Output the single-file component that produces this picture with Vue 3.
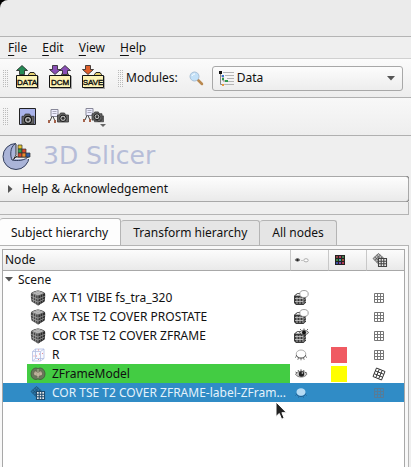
<script setup>
import { ref } from 'vue'

const menus = ['File', 'Edit', 'View', 'Help']
const folders = [
  { label: 'DATA', arrows: [{ x: 1, up: true, color: '#258a55' }] },
  { label: 'DCM', arrows: [{ x: 1, up: false, color: '#8a4fb5' }, { x: 11, up: true, color: '#8a4fb5' }] },
  { label: 'SAVE', arrows: [{ x: 1, up: false, color: '#e0602c' }] }
]
const tabs = ['Subject hierarchy', 'Transform hierarchy', 'All nodes']
const activeTab = ref(0)
const module = ref('Data')
const nodes = [
  { name: 'AX T1 VIBE fs_tra_320', icon: 'volume', vis: 'volhidden', grid: 'grid' },
  { name: 'AX TSE T2 COVER PROSTATE', icon: 'volume', vis: 'volhidden', grid: 'grid' },
  { name: 'COR TSE T2 COVER ZFRAME', icon: 'volume', vis: 'volshown', grid: 'grid' },
  { name: 'R', icon: 'roi', vis: 'closed', swatch: 'red', grid: 'grid' },
  { name: 'ZFrameModel', icon: 'model', vis: 'open', swatch: 'yellow', grid: 'tilted', state: 'green' },
  { name: 'COR TSE T2 COVER ZFRAME-label-ZFram...', icon: 'transform', vis: 'closedsel', grid: 'grid', state: 'selected' }
]
const arrowUp = 'M6 .5 11.500 5.500H8.500v4h-5v-4H.5Z'
const arrowDown = 'M3.500 .5h5v4h3L6 9.500 .5 4.500h3Z'
</script>

<template>
  <svg class="sprites" aria-hidden="true">
    <symbol id="volume" viewBox="0 0 16 16">
      <path d="M8 .5C10 .7 13 1.500 15 3.200c.3 3 .1 6-.6 8.300L8 15.500 1.600 11.500C.9 9 .7 6 1 3.200 3 1.500 6 .7 8 .5Z" fill="#444" />
      <path d="M8 .5 15 3.200 8 6 1 3.200Z" fill="#8d8d8d" />
      <path d="M8 6v9.500l6.400-4C15 9 15.300 6 15 3.200Z" fill="#2b2b2b" />
      <path d="M3.300 2.200 10.300 5M5.700 1.300 12.600 4M12.600 2.200 5.700 5M10.300 1.300 3.300 4" stroke="#ddd" stroke-width=".5" />
      <path d="M1 6.200l7 3 7-3M1.300 9l6.700 3.200L14.700 9M3.400 4.200v8.300M5.700 5v9M8 6v9.500" fill="none" stroke="#bbb" stroke-width=".6" />
      <path d="M10.300 5v9M12.600 4.200v8.300" stroke="#888" stroke-width=".6" />
    </symbol>
    <symbol id="roi" viewBox="0 0 16 16">
      <path d="M2.500 4.500h8v9.500h-8ZM5.500 2h8.500v9.500H5.500ZM2.500 4.500l3-2.500M10.500 4.500 14 2M10.500 14l3.500-2.500M2.500 14l3-2.500" fill="#f4f6ff" fill-opacity=".5" stroke="#b3bee2" stroke-width=".8" />
      <path d="M6 9h1M12 6.500h1M8 3h1M3.500 9h1M8 12.500h1M9 7h1" stroke="#e88890" />
    </symbol>
    <symbol id="model" viewBox="0 0 16 16">
      <path d="M1 8c0-3 2-6 5-6 1 0 1.400.5 2 .5S9 2 10 2c3 0 5 3 5 6s-2 5.500-5 5.500c-1 0-1.400-.5-2-.5s-1 .5-2 .5C3 13.500 1 11 1 8Z" fill="#66795a" stroke="#44543c" stroke-width=".8" />
      <path d="M4 6c1-2 3-1 4 1 1-2 3-3 4-1s0 4-2 4-1 2-2 1-1-1-2-1-3-2-2-4Z" fill="#b3a993" stroke="#665c4c" stroke-width=".7" />
      <path d="M8 3v9M4 8h2M10 8h2" stroke="#d4c9b0" stroke-width=".7" />
    </symbol>
    <symbol id="transform" viewBox="0 0 16 16">
      <path d="M1 6.500 6.500 1.500 12 6.500 6.500 12Z" fill="currentColor" opacity=".35" />
      <path d="M1 6.500 6.500 1.500 12 6.500 6.500 12ZM2.800 5l5.500 5.300M4.700 3.200l5.500 5.300M2.800 8.300 8.400 3.200M4.700 10.100l5.500-5.200" fill="none" stroke="currentColor" stroke-width=".7" />
      <path class="cell" d="M6.500 6.500h8v8h-8Z" />
      <path d="M6.500 6.500h8v8h-8ZM9.200 6.500v8M11.800 6.500v8M6.500 9.200h8M6.500 11.800h8" fill="none" stroke="currentColor" stroke-width="1.100" />
    </symbol>
    <symbol id="grid" viewBox="0 0 16 16">
      <path d="M3.500 3.500h9v9h-9ZM6.500 3.500v9M9.500 3.500v9M3.500 6.500h9M3.500 9.500h9" fill="none" stroke="currentColor" />
    </symbol>
    <symbol id="tilted" viewBox="0 0 16 16">
      <path d="M5.500 2 14 5.500 10.500 14 2 10.500ZM8.300 3.200 4.800 11.700M11.200 4.300 7.700 12.800M4.300 4.800l8.500 3.500M3.200 7.700l8.500 3.500" fill="none" stroke="#333" />
    </symbol>
    <symbol id="closed" viewBox="0 0 16 16">
      <path d="M3.500 9.500l-1.500 1M5.500 11l-.7 1.800M8 11v2.300M10.500 11l.7 1.800M12.500 9.500l1.500 1" stroke="#666" stroke-width=".9" />
      <ellipse cx="8" cy="7" rx="4.800" ry="4" fill="#fff" stroke="#999" stroke-width=".8" />
      <path d="M3.200 8c1 4.200 8.600 4.200 9.600 0" fill="none" stroke="#555" stroke-width=".9" />
    </symbol>
    <symbol id="closedsel" viewBox="0 0 16 16">
      <path d="M3.200 8.500c1 4 8.600 4 9.600 0M3.500 9.500l-1 1M6 11.500l-.5 1M10 11.500l.5 1M12.500 9.500l1 1" fill="none" stroke="#225f91" />
      <ellipse cx="8" cy="7" rx="4.500" ry="3.800" fill="#b5daf3" />
    </symbol>
    <symbol id="open" viewBox="0 0 16 16">
      <path d="M2.500 8.500C4 4.500 12 4 14 8c-2 4-9 4-11.500.5Z" fill="#ccc" stroke="#666" stroke-width=".8" />
      <circle cx="8.500" cy="8" r="2.700" fill="#222" />
      <circle cx="9.300" cy="7" r=".7" fill="#fff" />
      <path d="M2.500 6 4 7M5 4l.8 1.500M8 3.300V5M11 4l-.7 1.500M13.500 6l-1 1" stroke="#333" stroke-width=".8" />
    </symbol>
    <symbol id="volbase" viewBox="0 0 16 16">
      <path d="M1 6 4 3.500h9v9L10.500 15H3l-2-2Z" fill="#3a3a3a" />
      <path d="M1.500 6l3-2.500h5L7 6Z" fill="#eee" stroke="#333" stroke-width=".7" />
      <path d="M2 8.500h8M2 11.500h8M4 7v7M7 7v7M10 7v7M11.500 9.500l1.500-1M11.500 12l1.500-1" stroke="#ccc" stroke-width=".8" />
    </symbol>
    <symbol id="volhidden" viewBox="0 0 16 16">
      <use href="#volbase" />
      <ellipse cx="11" cy="4" rx="4.200" ry="3.500" fill="#fff" stroke="#888" stroke-width=".8" />
    </symbol>
    <symbol id="volshown" viewBox="0 0 16 16">
      <use href="#volbase" />
      <path d="M6.500 4.500C8 1.500 14 1.500 15.500 4.500 14 7.500 8 7.500 6.500 4.500Z" fill="#ccc" stroke="#444" stroke-width=".8" />
      <circle cx="11" cy="4.500" r="2" fill="#111" />
      <path d="M8 2 7 1M11 2V.5M14 2l1-1" stroke="#444" stroke-width=".8" />
    </symbol>
    <symbol id="camera" viewBox="0 0 12 11">
      <path d="M.5 3h2l1-2h4l1 2h3v7H.5Z" fill="#666" stroke="#333" stroke-width=".8" />
      <circle cx="6" cy="6.300" r="3.200" fill="#bbb" stroke="#111" />
      <circle cx="6" cy="6.300" r="1.500" fill="#333" />
    </symbol>
    <symbol id="scene" viewBox="0 0 12 15">
      <path d="M3 .5h7v7H3Z" fill="#eef" stroke="#889" />
      <path d="M4.500 2.500h4M4.500 4.500h4" stroke="#aab" />
      <path d="M4 7.500 2 12M5 7.500l2 4.500" stroke="#444" />
      <path d="M0 11h2v3H0ZM6 11h2v3H6Z" fill="#a5634c" />
    </symbol>
  </svg>

  <main class="window">
    <header class="titlebar"></header>
    <nav class="menubar" aria-label="Main menu">
      <button v-for="m in menus" :key="m" type="button"><u>{{ m[0] }}</u>{{ m.slice(1) }}</button>
    </nav>

    <div class="toolbar">
      <span class="grip"></span>
      <div class="folders">
        <button v-for="f in folders" :key="f.label" type="button" class="tool">
          <svg width="24" height="26" viewBox="0 0 24 26">
            <path d="M2 11h21v13H2Z" fill="#aaa" />
            <path d="M12.500 11V9.500l1.500-2h4l1.500 2V11" fill="#e3cf70" stroke="#222" />
            <path d="M.5 10.500h21v12H.5Z" fill="#fcf3b4" stroke="#111" />
            <path v-for="a in f.arrows" :key="a.x" :d="a.up ? arrowUp : arrowDown" :transform="`translate(${a.x - 1} 0)`" :fill="a.color" stroke="#222" stroke-width=".8" />
            <text x="11" y="20" text-anchor="middle" class="folder-text">{{ f.label }}</text>
          </svg>
        </button>
      </div>
      <span class="grip"></span>
      <label class="modules" for="module">Modules:</label>
      <button type="button" class="tool search" aria-label="Search">
        <svg width="15" height="15" viewBox="0 0 15 15">
          <path d="m9 9 4 4" stroke="#b98950" stroke-width="2.500" stroke-linecap="round" />
          <circle cx="5.500" cy="5.500" r="4.500" fill="#c3e1f8" stroke="#a9bfd4" />
          <path d="M3 5c.5-1.500 1.500-2 3-2" fill="none" stroke="#fff" />
        </svg>
      </button>
      <div class="combo">
        <svg width="15" height="15" viewBox="0 0 15 15">
          <path d="M4 1.500h11M6 4.500h9M8 7.500h7M8 10.500h7M6 13.500h9" stroke="#b4b4b4" stroke-width="1.200" />
          <path d="M1.500 2v11.500h4M1.500 5h3M4 5v5h4" fill="none" stroke="#888" />
          <path d="M0 0h3v3H0Z" fill="#111" />
          <path d="M3 4h2v2H3Z" fill="#3b78d0" />
          <path d="M3 7h2v2H3ZM6 9h3v2H6Z" fill="#2f9a4d" />
          <path d="M3 13h2v2H3Z" fill="#e79a3c" />
        </svg>
        <select id="module" v-model="module"><option>Data</option></select>
        <svg width="8" height="5" viewBox="0 0 8 5"><path d="M0 0h8L4 4.500Z" fill="#555" /></svg>
      </div>
    </div>

    <div class="toolbar second">
      <span class="grip"></span>
      <div class="captures">
        <button type="button" class="tool" aria-label="Capture">
          <svg width="17" height="18" viewBox="0 0 17 18">
            <path d="M.5 .5h16v16H.5Z" fill="#a9b3ea" stroke="#222" />
            <use href="#camera" x="2" y="5" width="14" height="12" />
          </svg>
        </button>
        <button type="button" class="tool" aria-label="Scene view">
          <svg width="22" height="18" viewBox="0 0 22 18">
            <use href="#scene" y="1" width="12" height="15" />
            <use href="#camera" x="9" y="4" width="12" height="11" />
          </svg>
        </button>
        <button type="button" class="tool" aria-label="Restore view">
          <svg width="25" height="20" viewBox="0 0 25 20">
            <use href="#scene" x="1" y="1" width="12" height="15" />
            <use href="#camera" x="12" y="6" width="10" height="10" />
            <use href="#camera" x="9" y="4" width="12" height="10" />
            <path d="M18 17h6l-3 3Z" fill="#666" />
          </svg>
        </button>
      </div>
    </div>

    <section class="brand">
      <svg width="29" height="29" viewBox="0 0 29 29">
        <circle cx="14" cy="14.500" r="13" fill="#aab4d8" stroke="#333e5c" />
        <path d="M14 1v11l-4 6 3-1h16V8L22 1Z" fill="#efefef" />
        <path d="M13 2C8 5 8 14 10 18c5 1 13 1 17-4" fill="none" stroke="#333e5c" />
        <path d="M14 2v11l-3 5M14 15h13M12 17l3-3" fill="none" stroke="#333" />
        <path d="M16 3h4v4h-4Z" fill="#e6c62c" stroke="#333" stroke-width=".7" />
        <path d="M16 7h4v4h-4Z" fill="#37a051" stroke="#333" stroke-width=".7" />
        <path d="M16 11h4v4h-4ZM20 7h4v4h-4Z" fill="#d9482b" stroke="#333" stroke-width=".7" />
        <path d="M20 11h4v4h-4Z" fill="#ed8b2d" stroke="#333" stroke-width=".7" />
        <path d="M24 11h4v4h-4Z" fill="#315fa8" stroke="#333" stroke-width=".7" />
      </svg>
      <h1>3D Slicer</h1>
    </section>

    <button type="button" class="help">
      <svg width="5" height="8" viewBox="0 0 5 8"><path d="M0 0 4.500 4 0 8Z" fill="#555" /></svg>
      Help &amp; Acknowledgement
    </button>
    <div class="help-body"></div>

    <div class="tabs" role="tablist">
      <button v-for="(t, i) in tabs" :key="t" type="button" role="tab" :aria-selected="i === activeTab" :class="{ active: i === activeTab }" @click="activeTab = i">{{ t }}</button>
    </div>

    <section class="pane">
      <div class="tree">
        <table>
          <colgroup><col /><col class="narrow" /><col class="narrow" /><col class="narrow" /></colgroup>
          <thead>
            <tr>
              <th>Node</th>
              <th>
                <svg width="16" height="16" viewBox="0 0 16 16">
                  <path d="M1 8c1-2 4-2 5 0-1 1.500-4 1.500-5 0Z" fill="#999" stroke="#666" stroke-width=".7" />
                  <circle cx="3.500" cy="8" r="1.200" fill="#222" />
                  <path d="m7.500 9 1-1" stroke="#999" />
                  <ellipse cx="12" cy="8.300" rx="2.200" ry="1.600" fill="#fff" stroke="#999" stroke-width=".8" />
                </svg>
              </th>
              <th>
                <svg width="16" height="16" viewBox="0 0 16 16">
                  <path d="M3 3h10v10H3Z" fill="#222" />
                  <path d="M4 4h2v2H4Z" fill="#914343" /><path d="M7 4h2v2H7Z" fill="#b03c60" /><path d="M10 4h2v2h-2Z" fill="#487848" />
                  <path d="M4 7h2v2H4Z" fill="#3b8a46" /><path d="M7 7h2v2H7Z" fill="#3fa0a0" /><path d="M10 7h2v2h-2Z" fill="#9a4f35" />
                  <path d="M4 10h2v2H4Z" fill="#3c50a5" /><path d="M7 10h2v2H7Z" fill="#7d42a0" /><path d="M10 10h2v2h-2Z" fill="#b03850" />
                </svg>
              </th>
              <th><svg width="16" height="16"><use href="#transform" /></svg></th>
            </tr>
          </thead>
          <tbody>
            <tr class="scene">
              <td colspan="4">
                <button type="button" class="expander">
                  <svg width="8" height="5" viewBox="0 0 8 5"><path d="M0 0h8L4 4.500Z" fill="#555" /></svg>
                  Scene
                </button>
              </td>
            </tr>
            <tr v-for="n in nodes" :key="n.name" :class="n.state">
              <td class="name">
                <div class="node">
                  <svg width="16" height="16"><use :href="'#' + n.icon" /></svg>
                  <span>{{ n.name }}</span>
                </div>
              </td>
              <td><svg width="16" height="16"><use :href="'#' + n.vis" /></svg></td>
              <td><i v-if="n.swatch" class="swatch" :class="n.swatch"></i></td>
              <td><svg width="16" height="16" class="gridicon"><use :href="'#' + n.grid" /></svg></td>
            </tr>
          </tbody>
        </table>
        <svg class="pointer" width="13" height="20" viewBox="0 0 13 20">
          <path d="M1 1v14.500l3.300-3 2.300 5.700 2.600-1-2.300-5.500H11.500Z" fill="#222" stroke="#fff" />
        </svg>
      </div>
    </section>
  </main>
</template>

<style>
body { background: #000; }
</style>

<style scoped>
.sprites { position: absolute; width: 0; height: 0; }
.window {
  min-height: 100vh;
  display: flex;
  flex-direction: column;
  font: 12px/18px "Noto Sans", sans-serif;
  color: #111;
}
svg { flex: none; display: block; }
button { font: inherit; color: inherit; border: 0; padding: 0; background: none; }
.titlebar { height: 36px; background: #ebebeb; border-bottom: 1px solid #b4b4b4; border-top-left-radius: 8px; }
.menubar { height: 21px; display: flex; gap: 15px; padding-left: 8px; background: #efefef; border-bottom: 1px solid #d0d0d0; }
.menubar u { text-underline-offset: 3px; text-decoration-skip-ink: none; }
.toolbar {
  height: 38px;
  display: flex;
  align-items: center;
  padding: 0 8px 0 3px;
  background: linear-gradient(#fbfbfb, #ededed);
  border-bottom: 1px solid #b0b0b0;
}
.toolbar.second { height: 37px; background: linear-gradient(#f8f8f8, #eee); }
.grip {
  width: 5px;
  height: 17px;
  background: linear-gradient(90deg, transparent 50%, #f5f5f5 50%) 0 0 / 2px 2px, linear-gradient(#bbb 50%, transparent 50%) 0 0 / 2px 2px;
}
.folders { display: flex; gap: 9px; padding: 0 12px 0 8px; }
.folder-text { font: 8px "Liberation Sans", sans-serif; fill: #111; stroke: #111; stroke-width: .4px; }
.modules { padding-left: 3px; }
.search { padding: 0 8px 0 11px; }
.combo {
  flex: 1;
  height: 25px;
  box-sizing: border-box;
  display: flex;
  align-items: center;
  gap: 3px;
  padding: 0 7px 0 6px;
  border: 1px solid #a8a8a8;
  border-radius: 3px;
  background: linear-gradient(#fcfcfc, #ededed);
}
.combo select { flex: 1; appearance: none; border: 0; padding: 0; background: none; font: inherit; color: inherit; }
.captures { display: flex; gap: 12px; padding-left: 11px; }
.brand { height: 40px; display: flex; align-items: center; gap: 12px; padding-left: 2px; background: #efefef; }
h1 { margin: 0; font: 25px/28px "DejaVu Sans", sans-serif; color: #b6bdd8; }
.help {
  height: 26px;
  margin-right: 2px;
  display: flex;
  align-items: center;
  gap: 9px;
  padding-left: 8px;
  border: 1px solid #a8a8a8;
  border-left: 0;
  border-radius: 0 3px 3px 0;
  background: linear-gradient(#fdfdfd, #eaeaea);
  box-shadow: 4px 0 #efefef;
}
.help-body { height: 12px; border: 1px solid #b4b4b4; border-width: 0 1px 1px 0; background: #efefef; box-shadow: 4px 0 #efefef; margin-right: 2px; }
.tabs { display: flex; align-items: flex-end; height: 30px; background: #efefef; }
.tabs button { height: 25px; padding: 0 12px; border: 1px solid #b4b4b4; border-width: 1px 1px 0 0; border-radius: 3px 3px 0 0; background: #e5e5e5; }
.tabs .active { height: 28px; padding-left: 11px; background: #fdfdfd; margin-bottom: -1px; }
.pane { flex: 1; display: flex; margin-right: 2px; padding: 3px 3px 0 2px; background: #f8f8f8; border: 1px solid #b4b4b4; border-width: 1px 1px 0 0; box-shadow: 4px 0 #efefef; }
.tree { flex: 1; min-width: 0; position: relative; border: 1px solid #a8a8a8; border-bottom: 0; background: #fff; }
table { width: 100%; table-layout: fixed; border-collapse: separate; border-spacing: 0; }
.narrow { width: 38px; }
th, td { padding: 0; height: 19px; }
th { height: 20px; font-weight: 400; text-align: left; background: linear-gradient(#fcfcfc, #e9e9e9); border-bottom: 1px solid #a8a8a8; }
th + th { border-left: 1px solid #c8c8c8; }
th:first-child { padding-left: 2px; }
td svg, th svg { margin-left: 3px; color: #444; }
td:last-child .gridicon, th:last-child svg { margin-left: 5px; }
.scene td { height: 17px; line-height: 17px; }
.expander { display: flex; align-items: center; gap: 5px; line-height: 17px; }
.expander svg { margin-left: 2px; }
.name { padding-left: 24px; }
.node { display: flex; align-items: center; gap: 6px; }
.node svg { margin-left: 3px; }
.node span { white-space: nowrap; line-height: 19px; }
.cell { fill: #eee; }
td .gridicon { color: #777; }
.green .name { background: linear-gradient(#43cc43, #43cc43) 24px 0 no-repeat; }
.selected td { background: #308cc6; }
.selected span { color: #e4f2fb; }
.selected svg { color: #1d4a6c; }
.selected .gridicon { color: #567c98; }
.selected .node svg .cell { fill: #308cc6; }
.swatch { display: block; width: 16px; height: 16px; margin-left: 3px; }
.red { background: #f05a62; }
.yellow { background: #ff0; }
.pointer { position: absolute; left: 272px; top: 151px; }
</style>
